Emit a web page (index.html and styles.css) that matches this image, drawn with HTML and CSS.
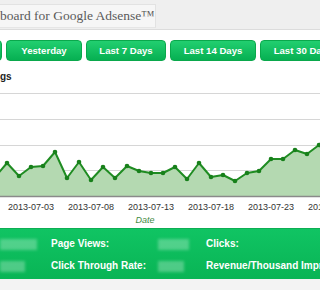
FILE: index.html
```html
<!DOCTYPE html>
<html>
<head>
<meta charset="utf-8">
<link rel="stylesheet" href="styles.css">
</head>
<body>
<div class="page">
  <header class="top">
    <div class="title-box">board for Google Adsense™</div>
  </header>
  <nav class="ranges">
    <a class="btn btn-first"></a>
    <a class="btn btn-yest">Yesterday</a>
    <a class="btn btn-7">Last 7 Days</a>
    <a class="btn btn-14">Last 14 Days</a>
    <a class="btn btn-30">Last 30 Days</a>
  </nav>
  <h2 class="heading">gs</h2>
  <div class="chart">
    <svg class="chart-svg" width="350" height="105" viewBox="0 0 350 105">
      <line x1="0" y1="0.5" x2="350" y2="0.5" class="grid"/>
      <line x1="0" y1="26.5" x2="350" y2="26.5" class="grid"/>
      <line x1="0" y1="52.5" x2="350" y2="52.5" class="grid"/>
      <line x1="0" y1="77.5" x2="350" y2="77.5" class="grid"/>
      <polygon class="area" points="-5,104 -5,84 7,70 19,83 31,74 43,73 55,59 67,85 79,69 91,87 103,74 115,85 127,73 139,78 151,80 163,80 175,74 187,86 199,70 211,84 223,82 235,88 247,80 259,78 271,66 283,66 295,57 307,61 319,52 331,63 343,56 355,60 355,104"/>
      <polyline class="line" points="-5,84 7,70 19,83 31,74 43,73 55,59 67,85 79,69 91,87 103,74 115,85 127,73 139,78 151,80 163,80 175,74 187,86 199,70 211,84 223,82 235,88 247,80 259,78 271,66 283,66 295,57 307,61 319,52 331,63 343,56 355,60"/>
      <g class="dots">
        <circle cx="7" cy="70" r="2.3"/><circle cx="19" cy="83" r="2.3"/><circle cx="31" cy="74" r="2.3"/>
        <circle cx="43" cy="73" r="2.3"/><circle cx="55" cy="59" r="2.3"/><circle cx="67" cy="85" r="2.3"/>
        <circle cx="79" cy="69" r="2.3"/><circle cx="91" cy="87" r="2.3"/><circle cx="103" cy="74" r="2.3"/>
        <circle cx="115" cy="85" r="2.3"/><circle cx="127" cy="73" r="2.3"/><circle cx="139" cy="78" r="2.3"/>
        <circle cx="151" cy="80" r="2.3"/><circle cx="163" cy="80" r="2.3"/><circle cx="175" cy="74" r="2.3"/>
        <circle cx="187" cy="86" r="2.3"/><circle cx="199" cy="70" r="2.3"/><circle cx="211" cy="84" r="2.3"/>
        <circle cx="223" cy="82" r="2.3"/><circle cx="235" cy="88" r="2.3"/><circle cx="247" cy="80" r="2.3"/>
        <circle cx="259" cy="78" r="2.3"/><circle cx="271" cy="66" r="2.3"/><circle cx="283" cy="66" r="2.3"/>
        <circle cx="295" cy="57" r="2.3"/><circle cx="307" cy="61" r="2.3"/><circle cx="319" cy="52" r="2.3"/>
        <circle cx="331" cy="63" r="2.3"/><circle cx="343" cy="56" r="2.3"/>
      </g>
      <line x1="0" y1="103.5" x2="350" y2="103.5" class="axis"/>
    </svg>
    <div class="xlabels">
      <span class="xl">2013-07-03</span>
      <span class="xl">2013-07-08</span>
      <span class="xl">2013-07-13</span>
      <span class="xl">2013-07-18</span>
      <span class="xl">2013-07-23</span>
      <span class="xl">2013-07-28</span>
    </div>
    <div class="xtitle">Date</div>
  </div>
  <section class="stats">
    <span class="val"><i class="blur w37"></i></span>
    <span class="lbl">Page Views:</span>
    <span class="val"><i class="blur w31"></i></span>
    <span class="lbl">Clicks:</span>
    <span class="val"><i class="blur w25"></i></span>
    <span class="lbl">Click Through Rate:</span>
    <span class="val"><i class="blur w26"></i></span>
    <span class="lbl">Revenue/Thousand Impressions:</span>
  </section>
  <div class="foot"></div>
</div>
</body>
</html>
```
FILE: styles.css
```css
html, body {
  margin: 0;
  padding: 0;
  background: #ffffff;
  overflow: hidden;
}
body {
  font-family: "Liberation Sans", Arial, sans-serif;
}
.page {
  width: 100%;
  overflow: hidden;
}
.top {
  height: 30px;
  background: #efefef;
  border-bottom: 1px solid #dcdcdc;
  box-sizing: border-box;
  padding-top: 4px;
}
.title-box {
  width: 156px;
  height: 24px;
  box-sizing: border-box;
  background: #f6f6f6;
  border-top: 1px solid #e2e2e2;
  border-right: 1px solid #e2e2e2;
  border-bottom: 1px solid #e6e6e6;
  font-family: "Liberation Serif", "Times New Roman", serif;
  font-size: 13.5px;
  line-height: 22px;
  color: #5a5a5a;
  white-space: nowrap;
  overflow: hidden;
}
.ranges {
  display: flex;
  gap: 4px;
  margin-top: 10px;
  margin-left: -40px;
  height: 21px;
  white-space: nowrap;
  overflow: hidden;
}
.btn {
  flex: none;
  display: block;
  height: 21px;
  box-sizing: border-box;
  border-radius: 4px;
  background: linear-gradient(#22cf70, #06b052);
  border: 1px solid #0aa84c;
  color: #ffffff;
  font-weight: bold;
  font-size: 9.6px;
  line-height: 19px;
  text-align: center;
}
.btn-first { width: 42px; }
.btn-yest { width: 76px; }
.btn-7 { width: 80px; }
.btn-14 { width: 86px; }
.btn-30 { width: 86px; }
.heading {
  margin: 0;
  height: 32px;
  box-sizing: border-box;
  padding-top: 10px;
  font-size: 10px;
  line-height: 12px;
  font-weight: bold;
  color: #222;
}
.chart {
  height: 135px;
  overflow: hidden;
}
.chart-svg {
  display: block;
}
.grid {
  stroke: #d6d6d6;
  stroke-width: 1;
}
.axis {
  stroke: #8a8a8a;
  stroke-width: 1.5;
}
.area {
  fill: #b4d9b1;
}
.line {
  fill: none;
  stroke: #1f8c22;
  stroke-width: 2;
  stroke-linejoin: round;
}
.dots circle {
  fill: #18801b;
}
.xlabels {
  display: flex;
  padding-left: 1px;
  margin-top: 3px;
  height: 12px;
  white-space: nowrap;
  overflow: hidden;
}
.xl {
  flex: none;
  width: 60px;
  text-align: center;
  font-size: 9px;
  line-height: 12px;
  color: #333;
}
.xtitle {
  text-align: center;
  width: 290px;
  font-size: 9px;
  line-height: 12px;
  font-style: italic;
  color: #3f8a3f;
  margin-top: 1px;
}
.stats {
  height: 51px;
  box-sizing: border-box;
  background: linear-gradient(#10c463, #09b455);
  border-top: 1px solid #0eae54;
  display: grid;
  grid-template-columns: 51px 106px 49px 1fr;
  grid-template-rows: 22px 22px;
  padding-top: 4px;
  align-items: center;
  white-space: nowrap;
  overflow: hidden;
}
.lbl {
  color: #ffffff;
  font-weight: bold;
  font-size: 10px;
  line-height: 12px;
}
.val {
  display: flex;
  align-items: center;
}
.blur {
  display: block;
  height: 11px;
  background: rgba(255, 255, 255, 0.28);
  filter: blur(1.5px);
}
.w37 { width: 37px; }
.w31 { width: 31px; margin-left: 1px; }
.w25 { width: 25px; }
.w26 { width: 26px; margin-left: 1px; }
.foot {
  height: 20px;
  background: #f3f3f3;
}
```
